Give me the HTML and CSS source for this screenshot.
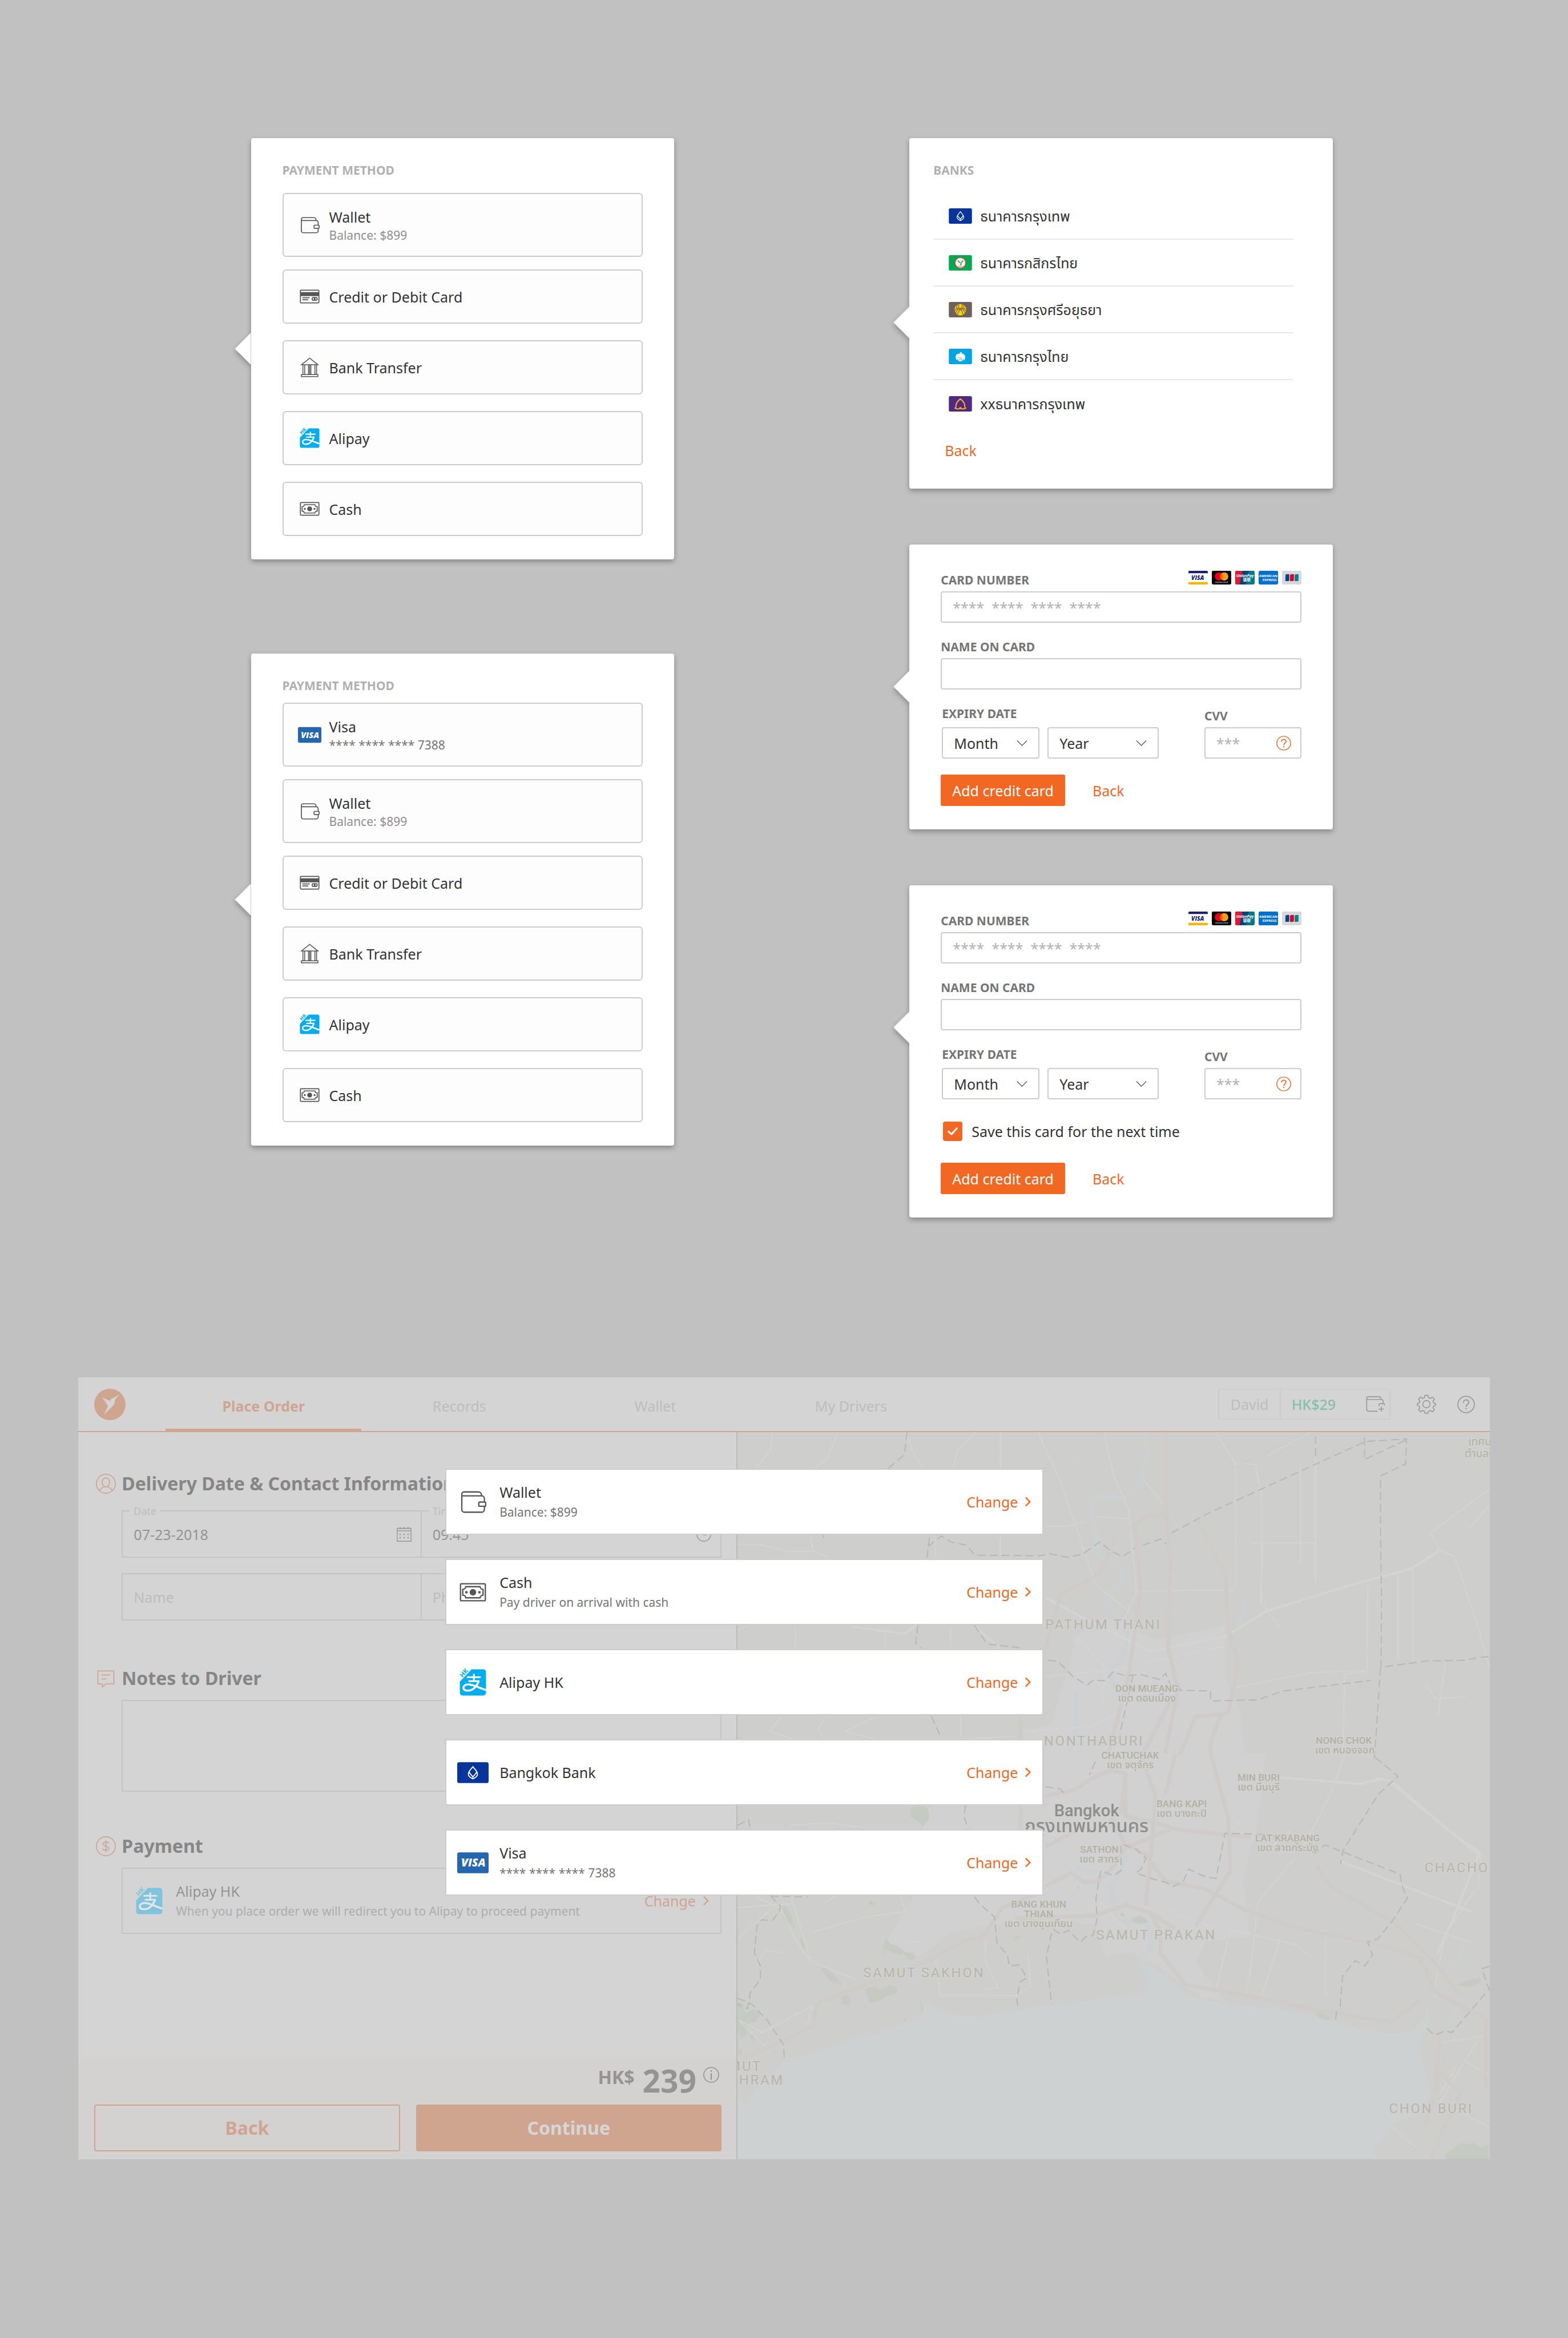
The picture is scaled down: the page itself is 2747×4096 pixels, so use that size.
FILE: index.html
```html
<!DOCTYPE html>
<html lang="en">
<head>
<meta charset="utf-8">
<meta name="viewport" content="width=device-width, initial-scale=1">
<title>Payment methods</title>
<link rel="stylesheet" href="styles.css">
</head>
<body>
<svg class="sprite" aria-hidden="true">
  <symbol id="i-wallet" viewBox="0 0 48 48">
    <g fill="none" stroke="currentColor" stroke-width="2">
      <path d="M37 14.500V13a4.500 4.500 0 0 0-4.500-4.500H10.500A3.500 3.500 0 0 0 7 12v23.500a4 4 0 0 0 4 4h26.500a4 4 0 0 0 4-4V30.500M41.500 24v-5.500a4 4 0 0 0-4-4H7"/>
      <rect x="33" y="24" width="10.500" height="6.500" rx="1.500"/>
    </g>
  </symbol>
  <symbol id="i-card" viewBox="0 0 48 48">
    <g fill="none" stroke="currentColor" stroke-width="2">
      <rect x="5" y="11" width="38" height="26" rx="1.500"/>
      <path d="M9 26.500h15M9 30.500h12"/>
      <circle cx="32" cy="28.800" r="3"/><circle cx="36.500" cy="28.800" r="3"/>
    </g>
    <path fill="currentColor" d="M5 15h38v8H5z"/>
  </symbol>
  <symbol id="i-bank" viewBox="0 0 48 48">
    <g fill="none" stroke="currentColor" stroke-width="1.800">
      <path d="M7 18.800 24 5.200l17 13.600zM10.200 19v19.500M13.800 19v19.500M21.600 19v19.500M26.400 19v19.500M24 19v19.500M34.800 19v19.500M38.200 19v19.500M7 39h34v4H7z"/>
    </g>
  </symbol>
  <symbol id="i-alipay" viewBox="0 0 48 48">
    <path fill="#00aeef" d="M22 4h18a4 4 0 0 1 4 4v32a4 4 0 0 1-4 4H8a4 4 0 0 1-4-4V23z"/>
    <g fill="none" stroke="#fff" stroke-width="2.600">
      <path d="M15 16h21M17 22h17M25.500 11v11"/>
      <path d="M33 22C30 30 24 36.500 16.500 36.500c-4.500 0-7-1.800-7-4.500s3-5 7.500-5c8 0 15 5 27 8.500" stroke-width="3"/>
    </g>
  </symbol>
  <symbol id="i-cash" viewBox="0 0 48 48">
    <g fill="none" stroke="currentColor" stroke-width="2">
      <rect x="5" y="11" width="38" height="26" rx="1.500"/>
      <path d="M13 15.500h22a4.500 4.500 0 0 0 4.500 4v9a4.500 4.500 0 0 0-4.500 4H13a4.500 4.500 0 0 0-4.500-4v-9a4.500 4.500 0 0 0 4.500-4z"/>
    </g>
    <g fill="currentColor"><circle cx="24" cy="24" r="5"/><circle cx="14" cy="24" r="2"/><circle cx="34" cy="24" r="2"/></g>
  </symbol>
  <symbol id="i-visa" viewBox="0 0 48 48">
    <rect y="8" width="48" height="32" rx="3" fill="#2566af"/>
    <path fill="#f5a033" d="M5 17.500h5.500l2 5.500c-2-3-4-4.500-7.500-5.500z"/>
  </symbol>
  <symbol id="b-bbl" viewBox="0 0 48 32">
    <rect width="48" height="32" rx="3" fill="#07359b"/>
    <g fill="none" stroke="#fff" stroke-width="1.600">
      <path d="M24 7c-2.500 3.500-7 7-7 11.500 0 3.500 3.500 5.500 7 7 3.500-1.500 7-3.500 7-7C31 14 26.500 10.500 24 7z"/>
      <path d="M18 14.500c1 3.500 4 5 6 8 2-3 5-4.500 6-8M24 22v3"/>
    </g>
  </symbol>
  <symbol id="b-kbank" viewBox="0 0 48 32">
    <rect width="48" height="32" rx="3" fill="#04a94f"/>
    <circle cx="24" cy="16" r="11" fill="#fff" stroke="#e5463f" stroke-width="1.800"/>
    <path fill="#cfc6bf" d="M16 22h16c-2 3-5 4.500-8 4.500S18 25 16 22z"/>
    <path fill="#3fb06a" d="M18 9.500l5.500 4.500 1 4 1-4.500 4.500-4c.5 4-1.500 5.500-3.500 7v4.500h-3V17c-3-1.500-5.500-3-5.500-7.500z"/>
  </symbol>
  <symbol id="b-bay" viewBox="0 0 48 32">
    <rect width="48" height="32" rx="3" fill="#6f5f5e"/>
    <circle cx="24" cy="16" r="12" fill="#ffd200"/>
    <g fill="none" stroke="#6f5f5e" stroke-width="1.500">
      <path d="M24 12l-6 14M24 12l6 14M20.500 4v8l3.500 5M27.500 4v8L24 17M20.500 12l-7 12M27.500 12l7 12M17 6l-.5 7-5 6M31 6l.5 7 5 6M16.500 13l3.500 3M31.500 13 28 16"/>
    </g>
  </symbol>
  <symbol id="b-ktb" viewBox="0 0 48 32">
    <rect width="48" height="32" rx="3" fill="#00a6e3"/>
    <path fill="#fff" d="M20 10c2 .8 3-.5 3.500-2.500 1.500-1 3.500-.5 4 1l-1.500.5c.3 1 1 1.300 2.500 1 4 1 6 4.500 5.500 8.500-.3 2-1 3.500-1.500 6.500-1-1.500-1.500-3-2.500-4-.5 3-2.500 5.500-6 5.500s-5.500-2.500-6-5.500c-.8 1-1.200 2-2 3.500-.3-2-1.500-4.500-2-7 0-4 2.500-7 6-7.500z"/>
    <path fill="none" stroke="#00a6e3" d="M19 19c2-1 4-1 5 0s3 1 4.500-.5M20.500 23c2 .5 3-1 4-1s2 1 3.500.5"/>
  </symbol>
  <symbol id="b-scb" viewBox="0 0 48 32">
    <rect width="48" height="32" rx="3" fill="#4e2a84"/>
    <path fill="none" stroke="#fdae17" stroke-width="2.400" d="M24 5.500c-3.500 3-9 8-9 13.500 0 3 .5 4.500-2 6 3.500 2 7 1.800 10 .8v-3M24 5.500c3.500 3 9 8 9 13.500 0 3-.5 4.500 2 6-3.500 2-7 1.800-10 .8v-3"/>
  </symbol>
  <symbol id="c-visa" viewBox="0 0 40 28">
    <path fill="#fff" d="M0 3h40v22H0z"/>
    <path fill="#1a1f71" d="M2 0h36a2 2 0 0 1 2 2v3H0V2a2 2 0 0 1 2-2z"/>
    <path fill="#f7b600" d="M0 23h40v3a2 2 0 0 1-2 2H2a2 2 0 0 1-2-2z"/>
  </symbol>
  <symbol id="c-mc" viewBox="0 0 40 28">
    <rect width="40" height="28" rx="2.500"/>
    <circle cx="14.500" cy="11.500" r="8.500" fill="#eb001b"/>
    <circle cx="25.500" cy="11.500" r="8.500" fill="#f79e1b"/>
    <path fill="#ff5f00" d="M20 5a8.500 8.500 0 0 1 0 13 8.500 8.500 0 0 1 0-13z"/>
  </symbol>
  <symbol id="c-up" viewBox="0 0 40 28">
    <rect width="40" height="28" rx="2.500" fill="#00798a"/>
    <path fill="#00447c" d="M13 0h15l-6 28H9z"/>
    <path fill="#e21836" d="M2.500 0H15L9 28H2.500A2.500 2.500 0 0 1 0 25.500v-23A2.500 2.500 0 0 1 2.500 0z"/>
  </symbol>
  <symbol id="c-amex" viewBox="0 0 40 28"><rect width="40" height="28" rx="2.500" fill="#006fcf"/></symbol>
  <symbol id="c-jcb" viewBox="0 0 40 28">
    <rect width="40" height="28" rx="2.500" fill="#d8d8d8"/>
    <path fill="#004685" d="M10 7h5v11a3 3 0 0 1-3 3H7V10a3 3 0 0 1 3-3z"/>
    <path fill="#de002b" d="M19.500 7h5v11a3 3 0 0 1-3 3h-5V10a3 3 0 0 1 3-3z"/>
    <path fill="#00838c" d="M29 7h5v11a3 3 0 0 1-3 3h-5V10a3 3 0 0 1 3-3z"/>
  </symbol>
  <symbol id="i-down" viewBox="0 0 22 12"><path fill="none" stroke="#555" stroke-width="1.600" d="m.7.700 10.300 10.300L21.300.700"/></symbol>
  <symbol id="i-next" viewBox="0 0 14 22"><path fill="none" stroke="currentColor" stroke-width="3" d="m2 2 9 9-9 9"/></symbol>
  <symbol id="i-help" viewBox="0 0 36 36">
    <circle cx="18" cy="18" r="16.800" fill="none" stroke="currentColor" stroke-width="2"/>
    <path fill="none" stroke="currentColor" stroke-width="2.400" d="M12.500 14.500c0-7.500 11-7.500 11-.8 0 4-5.500 4.300-5.500 8.800"/>
    <circle cx="18" cy="26.500" r="1.600" fill="currentColor"/>
  </symbol>
  <symbol id="i-info" viewBox="0 0 36 36">
    <circle cx="18" cy="18" r="16.800" fill="none" stroke="currentColor" stroke-width="2"/>
    <path fill="none" stroke="currentColor" stroke-width="2.600" stroke-linecap="round" d="M18 15.500V28"/>
    <circle cx="18" cy="9.500" r="1.700" fill="currentColor"/>
  </symbol>
  <symbol id="i-check" viewBox="0 0 40 40"><path fill="none" stroke="#fff" stroke-width="3.600" stroke-linecap="round" stroke-linejoin="round" d="m11.500 20.500 6 5.500 11-12"/></symbol>
  <symbol id="i-bird" viewBox="0 0 64 64">
    <circle cx="32" cy="32" r="32" fill="#cfa590"/>
    <path fill="#d4d4d4" d="M51.500 12 43 21.500c-1 2-1 4-1.500 7-.5 4-3 6-6 9L19.500 53 27 38.500l1-5-5-2.500 4 .5-7-4.500 6 2-9-7 8 4.500-10-8.500 9 4-11.500-6L33 25c0-3 2-5.500 5.500-6z"/>
  </symbol>
  <symbol id="i-gear" viewBox="0 0 40 40">
    <g fill="none" stroke="currentColor" stroke-width="2" stroke-linejoin="round">
      <path d="M17 1.500h6l1 5 4 1.700 4.200-2.900 4.200 4.200-2.900 4.200 1.700 4 3.300.5v4.500l-3.300.8-1.700 4 2.900 4.200-4.200 4.200-4.200-2.900-4 1.700-1 4h-6l-1-4-4-1.700-4.200 2.900-4.200-4.200 2.900-4.200-1.700-4-3.300-.8v-4.500l3.300-.5 1.700-4-2.900-4.200 4.200-4.200L12 8.200l4-1.700z"/>
      <circle cx="20" cy="20" r="7.500"/>
    </g>
  </symbol>
  <symbol id="i-topup" viewBox="0 0 40 34">
    <g fill="none" stroke="currentColor" stroke-width="2">
      <path d="M31 7V5a4 4 0 0 0-4-4H4.500A3.500 3.500 0 0 0 1 4.500V28a4 4 0 0 0 4 4h19M1 7h31a4 4 0 0 1 4 4v5M39 20v-2a2 2 0 0 0-2-2h-7a3 3 0 0 0-3 3v2M32 22v11M26.500 27.500h11"/>
    </g>
  </symbol>
  <symbol id="i-person" viewBox="0 0 40 40">
    <g fill="none" stroke="currentColor" stroke-width="2">
      <circle cx="20" cy="20" r="19"/><ellipse cx="20" cy="17" rx="7.500" ry="9"/><path d="M7 34c2-4.500 6-6.500 10.500-8M33 34c-2-4.500-6-6.500-10.500-8"/>
    </g>
  </symbol>
  <symbol id="i-note" viewBox="0 0 40 40">
    <path fill="none" stroke="currentColor" stroke-width="2" d="M4 5h32v26H20l-7 6v-6H4zM11 13h18M11 21h10"/>
  </symbol>
  <symbol id="i-dollar" viewBox="0 0 40 40">
    <g fill="none" stroke="currentColor" stroke-width="2">
      <circle cx="20" cy="20" r="19"/><path d="M26 14.500c0-4-12-4-12 .8 0 4.500 12 4 12 8.700 0 5-12.500 5-12.500.5M20 8v24"/>
    </g>
  </symbol>
  <symbol id="i-calendar" viewBox="0 0 30 30">
    <path fill="none" stroke="currentColor" stroke-width="1.800" d="M1 3h28v26H1zM1 8h28M7 0v5M15 0v5M23 0v5"/>
    <path stroke="currentColor" stroke-width="3" stroke-dasharray="3 5" d="M5.500 15h20M5.500 22h20"/>
  </symbol>
  <symbol id="i-clock" viewBox="0 0 30 30"><path fill="none" stroke="currentColor" stroke-width="1.800" d="M15 1a14 14 0 1 0 .01 0zM15 7v9h6"/></symbol>
</svg>

<main class="page">
  <div class="board">
    <div class="stack stack--methods">
      <section class="card card--five">
        <h2 class="card-title">PAYMENT METHOD</h2>
        <div class="options">
          <div class="option-group">
            <button class="option option--tall" type="button"><svg class="option-icon"><use href="#i-wallet"/></svg><span class="option-text"><span>Wallet</span><small class="balance">Balance: $899</small></span></button>
            <button class="option" type="button"><svg class="option-icon"><use href="#i-card"/></svg><span>Credit or Debit Card</span></button>
          </div>
          <button class="option" type="button"><svg class="option-icon"><use href="#i-bank"/></svg><span>Bank Transfer</span></button>
          <button class="option" type="button"><svg class="option-icon" viewBox="0 0 48 48"><use href="#i-alipay"/><text class="logo-hk" transform="translate(8 17) rotate(-48)">HK</text></svg><span>Alipay</span></button>
          <button class="option" type="button"><svg class="option-icon"><use href="#i-cash"/></svg><span>Cash</span></button>
        </div>
      </section>

      <section class="card card--six">
        <h2 class="card-title">PAYMENT METHOD</h2>
        <div class="options">
          <div class="option-group">
            <button class="option option--tall" type="button"><svg class="option-icon" viewBox="0 0 48 48"><use href="#i-visa"/><text class="logo-visa" x="6" y="30">VISA</text></svg><span class="option-text"><span>Visa</span><small>**** **** **** 7388</small></span></button>
            <button class="option option--tall" type="button"><svg class="option-icon"><use href="#i-wallet"/></svg><span class="option-text"><span>Wallet</span><small class="balance">Balance: $899</small></span></button>
            <button class="option" type="button"><svg class="option-icon"><use href="#i-card"/></svg><span>Credit or Debit Card</span></button>
          </div>
          <button class="option" type="button"><svg class="option-icon"><use href="#i-bank"/></svg><span>Bank Transfer</span></button>
          <button class="option" type="button"><svg class="option-icon" viewBox="0 0 48 48"><use href="#i-alipay"/><text class="logo-hk" transform="translate(8 17) rotate(-48)">HK</text></svg><span>Alipay</span></button>
          <button class="option" type="button"><svg class="option-icon"><use href="#i-cash"/></svg><span>Cash</span></button>
        </div>
      </section>
    </div>

    <div class="stack stack--forms">
      <section class="card card--banks">
        <h2 class="card-title">BANKS</h2>
        <ul class="banks" lang="th">
          <li class="bank"><svg class="bank-icon"><use href="#b-bbl"/></svg>ธนาคารกรุงเทพ</li>
          <li class="bank"><svg class="bank-icon"><use href="#b-kbank"/></svg>ธนาคารกสิกรไทย</li>
          <li class="bank"><svg class="bank-icon"><use href="#b-bay"/></svg>ธนาคารกรุงศรีอยุธยา</li>
          <li class="bank"><svg class="bank-icon"><use href="#b-ktb"/></svg>ธนาคารกรุงไทย</li>
          <li class="bank"><svg class="bank-icon"><use href="#b-scb"/></svg>xxธนาคารกรุงเทพ</li>
        </ul>
        <a class="text-link" href="#">Back</a>
      </section>

      <form class="card card--form">
        <div class="label-row">
          <label for="number-a">CARD NUMBER</label>
          <span class="brands">
            <svg viewBox="0 0 40 28"><use href="#c-visa"/><text class="logo-visa-sm" x="6" y="18.500">VISA</text></svg>
            <svg viewBox="0 0 40 28"><use href="#c-mc"/><text class="logo-mc" x="20" y="25">mastercard</text></svg>
            <svg viewBox="0 0 40 28"><use href="#c-up"/><text class="logo-up" x="20" y="12.500">UnionPay</text><text class="logo-up-cn" x="24" y="21">银联</text></svg>
            <svg viewBox="0 0 40 28"><use href="#c-amex"/><text class="logo-amex" x="1" y="13">AMERICAN</text><text class="logo-amex" x="8" y="21">EXPRESS</text></svg>
            <svg viewBox="0 0 40 28"><use href="#c-jcb"/></svg>
          </span>
        </div>
        <input class="control control--stars" id="number-a" type="text" placeholder="****  ****  ****  ****">
        <label class="label" for="name-a">NAME ON CARD</label>
        <input class="control" id="name-a" type="text">
        <div class="expiry-row">
          <div class="expiry">
            <label for="month-a">EXPIRY DATE</label>
            <div class="selects">
              <span class="select select--month"><select class="control" id="month-a"><option>Month</option></select><svg><use href="#i-down"/></svg></span>
              <span class="select select--year"><select class="control" aria-label="Expiry year"><option>Year</option></select><svg><use href="#i-down"/></svg></span>
            </div>
          </div>
          <div class="cvv">
            <label for="cvv-a">CVV</label>
            <span class="cvv-box"><input class="control control--stars" id="cvv-a" type="text" placeholder="***"><svg><use href="#i-help"/></svg></span>
          </div>
        </div>
        <div class="actions"><button class="primary" type="button">Add credit card</button><a class="text-link" href="#">Back</a></div>
      </form>

      <form class="card card--form">
        <div class="label-row">
          <label for="number-b">CARD NUMBER</label>
          <span class="brands">
            <svg viewBox="0 0 40 28"><use href="#c-visa"/><text class="logo-visa-sm" x="6" y="18.500">VISA</text></svg>
            <svg viewBox="0 0 40 28"><use href="#c-mc"/><text class="logo-mc" x="20" y="25">mastercard</text></svg>
            <svg viewBox="0 0 40 28"><use href="#c-up"/><text class="logo-up" x="20" y="12.500">UnionPay</text><text class="logo-up-cn" x="24" y="21">银联</text></svg>
            <svg viewBox="0 0 40 28"><use href="#c-amex"/><text class="logo-amex" x="1" y="13">AMERICAN</text><text class="logo-amex" x="8" y="21">EXPRESS</text></svg>
            <svg viewBox="0 0 40 28"><use href="#c-jcb"/></svg>
          </span>
        </div>
        <input class="control control--stars" id="number-b" type="text" placeholder="****  ****  ****  ****">
        <label class="label" for="name-b">NAME ON CARD</label>
        <input class="control" id="name-b" type="text">
        <div class="expiry-row">
          <div class="expiry">
            <label for="month-b">EXPIRY DATE</label>
            <div class="selects">
              <span class="select select--month"><select class="control" id="month-b"><option>Month</option></select><svg><use href="#i-down"/></svg></span>
              <span class="select select--year"><select class="control" aria-label="Expiry year"><option>Year</option></select><svg><use href="#i-down"/></svg></span>
            </div>
          </div>
          <div class="cvv">
            <label for="cvv-b">CVV</label>
            <span class="cvv-box"><input class="control control--stars" id="cvv-b" type="text" placeholder="***"><svg><use href="#i-help"/></svg></span>
          </div>
        </div>
        <label class="save"><span class="tick"><input type="checkbox" checked><svg><use href="#i-check"/></svg></span>Save this card for the next time</label>
        <div class="actions"><button class="primary" type="button">Add credit card</button><a class="text-link" href="#">Back</a></div>
      </form>
    </div>
  </div>

  <div class="app">
    <header class="topbar">
      <svg class="logo"><use href="#i-bird"/></svg>
      <nav class="tabs">
        <a class="tab tab--active" href="#">Place Order</a>
        <a class="tab" href="#">Records</a>
        <a class="tab" href="#">Wallet</a>
        <a class="tab" href="#">My Drivers</a>
      </nav>
      <div class="account">
        <span class="account-name">David</span>
        <span class="account-balance">HK$29<svg><use href="#i-topup"/></svg></span>
      </div>
      <svg class="gear"><use href="#i-gear"/></svg>
      <svg class="help"><use href="#i-help"/></svg>
    </header>

    <div class="workspace">
      <div class="order">
        <div class="order-body">
          <section>
            <h3 class="heading heading--wide"><svg><use href="#i-person"/></svg>Delivery Date &amp; Contact Information</h3>
            <div class="fields">
              <div class="field"><label for="date">Date</label><input id="date" type="text" value="07-23-2018"><svg><use href="#i-calendar"/></svg></div>
              <div class="field"><label for="time">Time</label><input id="time" type="text" value="09:45"><svg><use href="#i-clock"/></svg></div>
              <div class="field"><input type="text" placeholder="Name" aria-label="Name"></div>
              <div class="field"><input type="text" placeholder="Phone" aria-label="Phone"></div>
            </div>
          </section>
          <section class="notes">
            <h3 class="heading"><svg><use href="#i-note"/></svg>Notes to Driver</h3>
            <textarea aria-label="Notes to Driver"></textarea>
          </section>
          <section class="payment">
            <h3 class="heading"><svg><use href="#i-dollar"/></svg>Payment</h3>
            <div class="method method--muted">
              <svg class="method-icon" viewBox="0 0 48 48"><use href="#i-alipay"/><text class="logo-hk" transform="translate(8 17) rotate(-48)">HK</text></svg>
              <div class="method-text"><span>Alipay HK</span><small>When you place order we will redirect you to Alipay to proceed payment</small></div>
              <a class="change" href="#">Change<svg><use href="#i-next"/></svg></a>
            </div>
          </section>
        </div>
        <footer class="checkout">
          <div class="price"><span class="currency">HK$</span><span class="amount">239</span><svg><use href="#i-info"/></svg></div>
          <div class="buttons"><button class="big big--outline" type="button">Back</button><button class="big big--fill" type="button">Continue</button></div>
        </footer>
      </div>

      <svg class="map" viewBox="0 0 1536 1484" preserveAspectRatio="xMidYMid slice">
        <!-- northern sheet -->
        <svg x="-24" y="-134" width="1600" height="800" viewBox="0 0 1568 1568" preserveAspectRatio="none">
          <path class="urban" d="M700 1080l60-80 100 95 140-60v215l30 130 10 200H590v-110l60-40 40-250z"/>
          <g class="river">
            <path d="M835 260l10 80-20 140-30 50-50-10-15 60 10 80 5 90 50 60-5 60-30 50 15 70 30 60-5 80-30 100 10 60"/>
            <path d="M700 1300v160l-15 100M1040 940l-12 90M697 360v30" />
          </g>
          <g class="road">
            <path d="M95 262l-5 70-30 75M225 262l-20 100-25 45M360 262l15 80 20 65M500 262l-35 70-10 75M550 262v500M625 262l45 200 40 230 30 180 80 130M757 262l20 180 30 130 15 330-40 170M980 262l40 125 40 5 12 130v420l35 100M1020 380v500M1075 700l-5 250M1150 390v400M1180 270v600M1170 262l-90 100M24 1060l20-25M24 710l50 5 50 25h60M170 675l5 60 30 30M420 675v90M640 640h40l40-20M740 600l70 10M1050 705h130M820 900l120-5h80M835 450l40 100M1528 490l-118 175 18 70 30 25 50 300 20 150M1528 550l-20 50-20 50M1345 830v340M1375 800v380M1285 870l-2 350-45 10-3 330M1440 1180l-15 220M1400 1270l20 60 60-10M110 1400l-20 60 60 40M200 1400l-15 50 10 40M300 1400l-60 60 60 30M470 1400v90l110-10M140 1040v85M320 1060v70M450 1040v85M640 1240l150-30 60-30 150-60M700 1080l60 120-5 150M590 1460l140-20 60-60M1020 1285l150-60 110-10"/>
            <path class="road--wide" d="M500 1040l50 90M255 1042l105 27 20-34M640 925l80 85 130 130 150-60 80-100 160-100 130-70 58-73"/>
          </g>
          <g class="highway">
            <path d="M880 262v320l10 200-5 340 20 170-30 300M940 600l60 240 5 200 20 150-20 200M890 590l-50 10-30 50M820 640l10 250-15 230-10 130-40 300M780 680l-30 150-80 80-30 210M1000 1390l-60 10-20 100-15 68M990 1400l-20 100v68M890 1340l-60 228M590 1400v160"/>
            <path class="highway--thin" d="M1160 270l-130 120-110 150"/>
          </g>
          <g class="border">
            <path d="M363 262l-5 90-32 55M196 675v10M408 685l-5 80M405 720l27-42 20 25 30 12 17 40 130 2 20-8 35 14 30-12 35-50 20 35 25 25 25-35M835 715l35-25 12 20M893 665l75-80 312-285 82-10-2 100-50 48v200l2 300-1 265 90-25 70-2 50-15 30 2M1180 278v95M1278 285v85M1280 370l80-75M385 1035l-5 70 12 22M498 1035l25 75 65 15M412 1400l20 88M645 1175l20 5 30 60 28 35 12-20 25 2 15-35 25 15 30-5 38 20 12-25 10 45 15 3 5 20 60 3v40l95-5 50-35 175-42M1310 1205l-12 363"/>
            <path d="M815 1235l-28 250"/>
          </g>
        </svg>
        <!-- southern sheet -->
        <svg x="-24" y="656" width="1600" height="850" viewBox="0 0 1568 1568" preserveAspectRatio="none">
          <path class="urban" d="M410 0h670l-15 260-30 210 15 220-90 15-20 80 60 150-50-20-90-120-50-50-50 20-20-120-120-30-170 60-70 100-60-60 60-190z"/>
          <path class="water" d="M24 1290l14 43 30-90 50-85 82-48 50-35 60-30 60-35 22-25 4-50 14 5 20 25 30 20 60 2 65-22 70-23 65-10 70-20 45-12 10-40-17-60 30 5 32 50 25 45 35 25 70 20 110 20 70 35 60 35 70 20 40-7 30-48v-50l8 60-13 40-8 70 13 80 10 70-10 70-30 25-40 30-10 45-28 60 18 27H24z"/>
          <g class="river">
            <path d="M800 385l-10 60-20 60 15 120 60 20 10 60-25 90 20 60M700 430l40 20M385 860l-5-60M1430 850l10 70 20 40-15 60M1480 730l-30 80"/>
          </g>
          <g class="green">
            <path d="M370 205l20-8 15 8 3 35-12 35-12-20-14-15zM112 580l8-8 6 20 8 20-6 25-12-15zM118 612l14 5 2 25-12-5zM130 640l10 10-4 8zM150 690l8 20 2 30-8-8zM190 810l10-5 12 20 14 25-4 18-14-15zM225 850l8 15-4 15zM320 695l10 20 15 10 15 25-10 10-20-15-15-10zM350 745l25 5 8 20-14 8zM312 740l10 5-2 12zM280 885l20-10 10 15 20-20 14 15-2 20-20 8-16 20-18 4-6-30zM232 915l12-8 8 20-6 24-12-12zM24 930l10 10 6 40 18-20 12 20-10 30-14 5-6 50-10 10-6-30zM44 1050l14 15-4 20zM24 1105l10 15-6 20zM814 618l14-8 12 12 6 14-22 4-12-8zM788 602l8-2 2 12-6 2zM1180 978l10-6 20 20-2 12-20-8zM1460 875l20-20 30-12v20l-28 16-16-6zM1440 1505l30-40 14 8 12-10 16 20 14-10v55h-88zM390 930l6 30-4 20zM357 993l6 12-5 8zM704 495l4 12-4 6zM578 690l12-5 2 10-16 8zM285 560l8-5 8 12-10 6z"/>
          </g>
          <g class="road">
            <path d="M60 540l50 40 30 120 30 80 90 70M24 580l110-15M24 700l70-120M60 800l20-60 35 10M130 535l40 240M350 535l10 60-80 20-110 60M420 780l10 130h80l70 2 30-35-5-120M520 700v80l25 100-30 10M24 1000l50 50 100-100-10 70M30 1010l60 110M330 715l80-10M750 560l60 120M640 150l70 80M870 580l100 70 80 30 90 40 35 50M1135 400l-70 160-15 250-10 100M1200 700v210M1030 250l-30 60M1130 290l-50 80M1110 690l-40 240M1010 660l-30 240M1240 0l-30 150-60 220M1120 90l150 25 50-20 180 280 10 20-5 120M1510 380v60h18M1500 510l-60 170-20 180v60M1528 1060l-100 30M1500 1090l-70 220 100 100M1480 1160l48 50M1330 1400l50 80M1460 1180l-30 100M130 270l70-10 80 20M200 560l50-60M1380 640l110 70"/>
            <path class="road--wide" d="M1040 80l80 12 150 22 40-20 25 15 105 170 68 95-60 280-25 100M1230 405l150 110 115 82"/>
          </g>
          <g class="highway">
            <path d="M640 160l60-25 40-50 30-20 30 10v160l70 30 30 20 150 30M640 500l50-50 30 35 30-10 30-60 20-60 90-70M770 240l30 100 40 40 40 100 80 30 80 80 90 60 200 80 60 40 30 130 60 60 40 30v280M24 1160l150-130 10-90 80-60 130-90 90-90 30-10 40-110 80-60M580 620l160-10 60-40 50 30 50 60M850 600l20 70v80l50 120 150 50 130 50 130 40 60-80M830 0l30 160-10 250-10 160M970 0l35 240 5 200-70 210M900 0l-20 150M800 80l-10 150M590 130v160M640 350l60-60M1180 420l30 80 130 140 80 150 50 120M1400 1400l30-200 40 80-60 240M1430 1040l-10 200"/>
          </g>
          <g class="border">
            <path d="M480 195l-3 40 8 50M640 125l30 8 8 20M498 540l10 25 30 50 5 100 20 40 5 45 20-5 15 50-15 15-5 70 3 35M652 675l-10 90 10 180M655 660l15 20 15-15 25 45 10-20 15-5 8-60-2-80 5-60 5-45 25 20 15-20v-100l30 20 20 35-10 40-10 15 40 25 20 10 15 15 20-20 10-45 35 30 20 5 18-170 80 4 50 20 50 50 20-30 150 110 5 50 10 40-30 85-30 70-20 10 10 50-15 40-20-20-25 60-5 120M1220 1000l3-40M1300 15l45 70-40 70-40 120-30 90-5 50M90 535l20 40-2 20-15 35-20-5-10 25-5 100 12 50v50l-20 50-6 60-24-20M24 920l30 25 30 60 32 90 2 60M24 270l22-20 3 25M90 537l75 3M1528 800l-15 10 10 60 5 15-25 55-50 110-15-5-20 15-15-25M740 30l-12 50"/>
          </g>
        </svg>
        <g class="place place--region">
          <text x="747" y="402">PATHUM THANI</text>
          <text x="728" y="640">NONTHABURI</text>
          <text x="855" y="1035">SAMUT PRAKAN</text>
          <text x="381" y="1112">SAMUT SAKHON</text>
          <text x="-4" y="1304">SAMUT</text>
          <text x="-4" y="1332">SONGKHRAM</text>
          <text x="1416" y="1390">CHON BURI</text>
          <text x="1532" y="898">CHACHOENGSAO</text>
        </g>
        <g class="place place--district">
          <text x="836" y="530">DON MUEANG</text><text class="thai" x="836" y="550">เขต ดอนเมือง</text>
          <text x="802" y="666">CHATUCHAK</text><text class="thai" x="802" y="686">เขต จตุจักร</text>
          <text x="1238" y="636">NONG CHOK</text><text class="thai" x="1240" y="656">เขต หนองจอก</text>
          <text x="1064" y="712">MIN BURI</text><text class="thai" x="1064" y="732">เขต มีนบุรี</text>
          <text x="907" y="765">BANG KAPI</text><text class="thai" x="907" y="785">เขต บางกะปิ</text>
          <text x="739" y="859">SATHON</text><text class="thai" x="739" y="878">เขต สาทร</text>
          <text x="1123" y="835">LAT KRABANG</text><text class="thai" x="1123" y="855">เขต ลาดกระบัง</text>
          <text x="615" y="970">BANG KHUN</text><text x="615" y="990">THIAN</text><text class="thai" x="615" y="1010">เขต บางขุนเทียน</text>
        </g>
        <g class="place place--town">
          <text x="1526" y="27">เทศบาล</text><text x="1526" y="51">ตำบลบาง</text>
        </g>
        <g class="place place--city">
          <text x="713" y="784">Bangkok</text><text class="thai" x="713" y="817">กรุงเทพมหานคร</text>
        </g>
      </svg>
    </div>

    <div class="popups">
      <div class="method"><svg class="method-icon"><use href="#i-wallet"/></svg><div class="method-text"><span>Wallet</span><small>Balance: $899</small></div><a class="change" href="#">Change<svg><use href="#i-next"/></svg></a></div>
      <div class="method"><svg class="method-icon"><use href="#i-cash"/></svg><div class="method-text"><span>Cash</span><small>Pay driver on arrival with cash</small></div><a class="change" href="#">Change<svg><use href="#i-next"/></svg></a></div>
      <div class="method"><svg class="method-icon" viewBox="0 0 48 48"><use href="#i-alipay"/><text class="logo-hk" transform="translate(8 17) rotate(-48)">HK</text></svg><div class="method-text"><span>Alipay HK</span></div><a class="change" href="#">Change<svg><use href="#i-next"/></svg></a></div>
      <div class="method"><svg class="method-icon"><use href="#b-bbl"/></svg><div class="method-text"><span>Bangkok Bank</span></div><a class="change" href="#">Change<svg><use href="#i-next"/></svg></a></div>
      <div class="method"><svg class="method-icon" viewBox="0 0 48 48"><use href="#i-visa"/><text class="logo-visa" x="6" y="30">VISA</text></svg><div class="method-text"><span>Visa</span><small>**** **** **** 7388</small></div><a class="change" href="#">Change<svg><use href="#i-next"/></svg></a></div>
    </div>
  </div>
</main>
</body>
</html>
```
FILE: styles.css
```css
*, *::before, *::after { box-sizing: border-box; }

:root {
  --orange: #f26722;
  --orange-muted: #cfa590;
  --ink: #333;
  --line: #ccc;
  --surface: #d4d4d4;
}

body {
  margin: 0;
  background: #c1c1c1;
  color: var(--ink);
  font: 25px/36px "Noto Sans", "Noto Sans Thai", sans-serif;
}

button, input, select, textarea { font: inherit; color: inherit; }
input, select, textarea { margin: 0; border-radius: 0; }
a { color: inherit; text-decoration: none; }
svg { display: block; flex: none; }
h2, h3, ul { margin: 0; padding: 0; }
.sprite { position: absolute; width: 0; height: 0; }

.page { padding: 242px 0 312px; }

.board {
  display: grid;
  grid-template-columns: 1fr 1fr;
  column-gap: 15vw;
  align-items: start;
  padding: 0 15% 0 16%;
}
.stack { display: flex; flex-direction: column; }
.stack--methods { gap: 165px; }
.stack--forms { gap: 98px; }

/* Callout cards */
.card {
  position: relative;
  padding: 42px 55px 41px;
  background: #fff;
  border-radius: 4px;
  filter: drop-shadow(0 4px 5px rgba(0, 0, 0, .3));
}
.card::before {
  content: "";
  position: absolute;
  right: 100%;
  top: 50%;
  width: 28px;
  height: 56px;
  margin-top: -28px;
  background: #fff;
  clip-path: polygon(0 50%, 100% 0, 100% 100%);
}
.card-title {
  margin-bottom: 26px;
  color: #b0b0b0;
  font-size: 21px;
  line-height: 28px;
}
.card--six .card-title { margin-bottom: 16px; }

.options { display: grid; gap: 29px; }
.option-group { display: grid; gap: 22px; }
.option {
  display: flex;
  align-items: center;
  gap: 14px;
  width: 100%;
  height: 95px;
  padding: 0 25px;
  border: 2px solid var(--line);
  border-radius: 6px;
  background: #fdfdfd;
  text-align: left;
}
.option--tall { height: 112px; }
.option-icon { width: 41px; height: 41px; color: #555; }
.option-text { display: grid; }
.option-text small { color: #757575; font-size: 21px; line-height: 28px; }
.option-text .balance { color: #8f8f8f; }

.logo-hk { fill: #00aeef; font: 700 10px "Noto Sans", sans-serif; }
.logo-visa { fill: #fff; font: italic 800 17px "Open Sans", sans-serif; }
.logo-visa-sm { fill: #1a1f71; font: italic 800 12px "Open Sans", sans-serif; }
.logo-mc { fill: #fff; font: 5px "Noto Sans", sans-serif; text-anchor: middle; }
.logo-up { fill: #fff; font: italic 700 8px "Noto Sans", sans-serif; text-anchor: middle; }
.logo-up-cn { fill: #fff; font: 700 8px "Noto Sans CJK SC", sans-serif; text-anchor: middle; }
.logo-amex { fill: #fff; font: 700 7px "Noto Sans", sans-serif; }

/* Bank list */
.card--banks { padding: 42px 69px 50px 42px; }
.card--banks::before { top: 323px; }
.banks { list-style: none; }
.bank {
  display: flex;
  align-items: center;
  gap: 14px;
  height: 82px;
  padding-left: 27px;
  border-bottom: 2px solid #e8e8e8;
}
.bank:last-child { border-bottom: 0; }
.bank-icon { width: 41px; height: 27px; }
.text-link { color: var(--orange); line-height: 34px; }
.card--banks .text-link { display: block; margin: 24px 0 0 20px; }

/* Card form */
.card--form { padding-top: 46px; }
.card--form::before { top: 249px; }
.card--form label:not(.save) {
  display: block;
  color: #757575;
  font-size: 21px;
  font-weight: 700;
  line-height: 28px;
}
.label-row { display: flex; justify-content: space-between; align-items: flex-end; height: 30px; margin-bottom: 6px; }
.brands { display: flex; gap: 7px; align-self: flex-start; }
.brands svg { width: 34px; height: 24px; }
.card--form .label { margin: 28px 0 6px; }
.control {
  display: block;
  width: 100%;
  height: 55px;
  padding: 0 19px;
  border: 2px solid var(--line);
  border-radius: 4px;
  background: #fff;
  appearance: none;
}
.control::placeholder { color: #b0b0b0; opacity: 1; }
.control--stars { white-space: pre; }
.expiry-row { display: flex; justify-content: space-between; align-items: flex-end; margin-top: 28px; }
.expiry { display: grid; gap: 10px; padding-left: 2px; }
.selects { display: flex; gap: 14px; }
.select, .cvv-box { display: grid; align-items: center; }
.select > *, .cvv-box > * { grid-area: 1 / 1; }
.select svg, .cvv-box svg { justify-self: end; pointer-events: none; }
.select svg { width: 19px; height: 10px; margin-right: 21px; }
.cvv-box svg { width: 26px; height: 26px; margin-right: 18px; color: var(--orange); }
.select--month { width: 171px; }
.select--year { width: 195px; }
.cvv { display: grid; gap: 6px; width: 170px; }
.save { display: flex; align-items: center; gap: 16px; height: 34px; margin: 39px 0 38px 4px; }
.tick { display: grid; width: 34px; height: 34px; }
.tick > * { grid-area: 1 / 1; width: 34px; height: 34px; }
.tick input { appearance: none; border-radius: 4px; background: var(--orange); }
.tick svg { pointer-events: none; z-index: 1; }
.actions { display: flex; align-items: center; gap: 48px; margin-top: 28px; }
.primary {
  height: 55px;
  padding: 0 20px;
  border: 0;
  border-radius: 3px;
  background: var(--orange);
  color: #fff;
}

/* Order screen */
.app {
  position: relative;
  margin: 280px 5% 0;
  background: var(--surface);
}
.topbar {
  display: flex;
  align-items: center;
  height: 96px;
  padding: 0 26px 0 28px;
  border-bottom: 2px solid var(--orange-muted);
  color: #bdbdbd;
}
.logo { width: 55px; height: 55px; margin-right: 70px; }
.tabs { display: flex; align-self: stretch; flex: 0 1 1372px; }
.tab { flex: 1; padding: 32px 0 22px; border-bottom: 4px solid transparent; text-align: center; }
.tab--active { border-color: var(--orange-muted); color: var(--orange-muted); font-weight: 700; }
.account { display: flex; width: 302px; height: 54px; margin-left: auto; border: 2px solid #cdcdcd; line-height: 50px; }
.account-name { width: 108px; padding-left: 20px; border-right: 2px solid #cdcdcd; }
.account-balance { display: flex; flex: 1; justify-content: space-between; align-items: center; padding: 0 7px 0 19px; color: #86bfae; font-weight: 500; }
.account-balance svg { width: 34px; height: 28px; color: #9a9a9a; }
.gear { width: 34px; height: 34px; margin: 0 37px 0 46px; color: #9a9a9a; }
.help { width: 31px; height: 31px; color: #9a9a9a; }

.workspace { display: grid; grid-template-columns: 467fr 533fr; }
.order { display: flex; flex-direction: column; justify-content: space-between; border-right: 2px solid #b9bbbb; }
.order-body { padding: 69px 26px 0 76px; }
.heading {
  display: flex;
  align-items: center;
  gap: 10px;
  margin: 0 0 17px -45px;
  color: #868686;
  font-size: 32px;
  line-height: 42px;
}
.heading--wide { margin-bottom: 26px; }
.heading svg { width: 35px; height: 35px; color: var(--orange-muted); }
.fields { display: grid; grid-template-columns: 1fr 1fr; row-gap: 27px; }
.field { position: relative; display: flex; align-items: center; height: 83px; padding-right: 16px; border: 2px solid #c4c4c4; }
.field:nth-child(even) { margin-left: -2px; }
.field label {
  position: absolute;
  top: -12px;
  left: 12px;
  padding: 0 7px;
  background: var(--surface);
  color: #bdbdbd;
  font-size: 18px;
  line-height: 22px;
}
.field input { flex: 1; min-width: 0; padding: 0 0 0 19px; border: 0; background: none; color: #949494; }
.field input::placeholder { color: #bdbdbd; opacity: 1; }
.field svg { width: 26px; height: 26px; color: #9c9c9c; }
.notes { margin-top: 80px; }
.notes textarea { display: block; width: 100%; height: 161px; border: 2px solid #c4c4c4; background: none; resize: none; }
.payment { margin-top: 74px; }

.checkout { margin-top: 216px; padding: 10px 26px 14px 28px; background: #d3d2d0; }
.price { display: flex; justify-content: flex-end; align-items: flex-start; height: 73px; padding-right: 4px; color: #949494; font-weight: 700; }
.currency { margin: 4px 14px 0 0; font-size: 32px; line-height: 42px; }
.amount { margin-right: 12px; font-size: 55px; line-height: 62px; }
.price svg { width: 28px; height: 28px; margin-top: 7px; }
.buttons { display: grid; grid-template-columns: 1fr 1fr; gap: 28px; }
.big { height: 82px; border: 2px solid var(--orange-muted); border-radius: 4px; font-size: 32px; font-weight: 700; }
.big--outline { background: none; color: var(--orange-muted); }
.big--fill { background: var(--orange-muted); color: #d6d6d6; }

/* Chosen payment method row */
.method {
  display: flex;
  align-items: center;
  gap: 19px;
  height: 116px;
  padding: 0 19px;
  border: 2px solid var(--line);
  background: #fff;
}
.method-icon { width: 55px; height: 55px; color: #555; }
.method-text { display: grid; flex: 1; }
.method-text small { color: #757575; font-size: 21px; line-height: 34px; }
.change { display: flex; align-items: center; gap: 12px; color: var(--orange); }
.change svg { width: 12px; height: 18px; }
.method--muted { border-color: #c4c4c4; background: none; color: #949494; }
.method--muted .method-icon { opacity: .4; }
.method--muted .method-text small { color: #adadad; }
.method--muted .change { color: var(--orange-muted); }

.popups { position: absolute; top: 160px; left: 26%; display: grid; gap: 42px; width: 42.4%; }

/* Map */
.map { width: 100%; height: 0; min-height: 100%; background: #cecfcc; }
.map path { fill: none; vector-effect: non-scaling-stroke; }
.map .urban { fill: #d1d1d2; }
.map .water { fill: #cdd1d2; }
.map .green path { fill: #c5cbc1; }
.map .river { stroke: #cbd1d2; stroke-width: 7; stroke-linejoin: round; }
.map .road { stroke: #d4d4d2; stroke-width: 2; }
.map .road--wide { stroke-width: 4; }
.map .highway { stroke: #cfcbc9; stroke-width: 7; stroke-linejoin: round; }
.map .highway--thin { stroke-width: 2; }
.map .border { stroke: #b7b8b6; stroke-width: 2; stroke-dasharray: 14 7; }
.place { text-anchor: middle; font-family: Roboto, "Noto Sans Thai", sans-serif; stroke: #d2d2d0; paint-order: stroke; stroke-width: 4px; fill: #b3b0a4; }
.place--region { font-size: 28px; letter-spacing: 3px; fill: #b8b5ac; }
.place--district { font-size: 20px; font-weight: 500; }
.place--district .thai { font-size: 21px; }
.place--town { font-size: 22px; }
.place--city { font-size: 34px; font-weight: 500; fill: #8e8e8c; }
.place--city .thai { font-size: 38px; }
```
